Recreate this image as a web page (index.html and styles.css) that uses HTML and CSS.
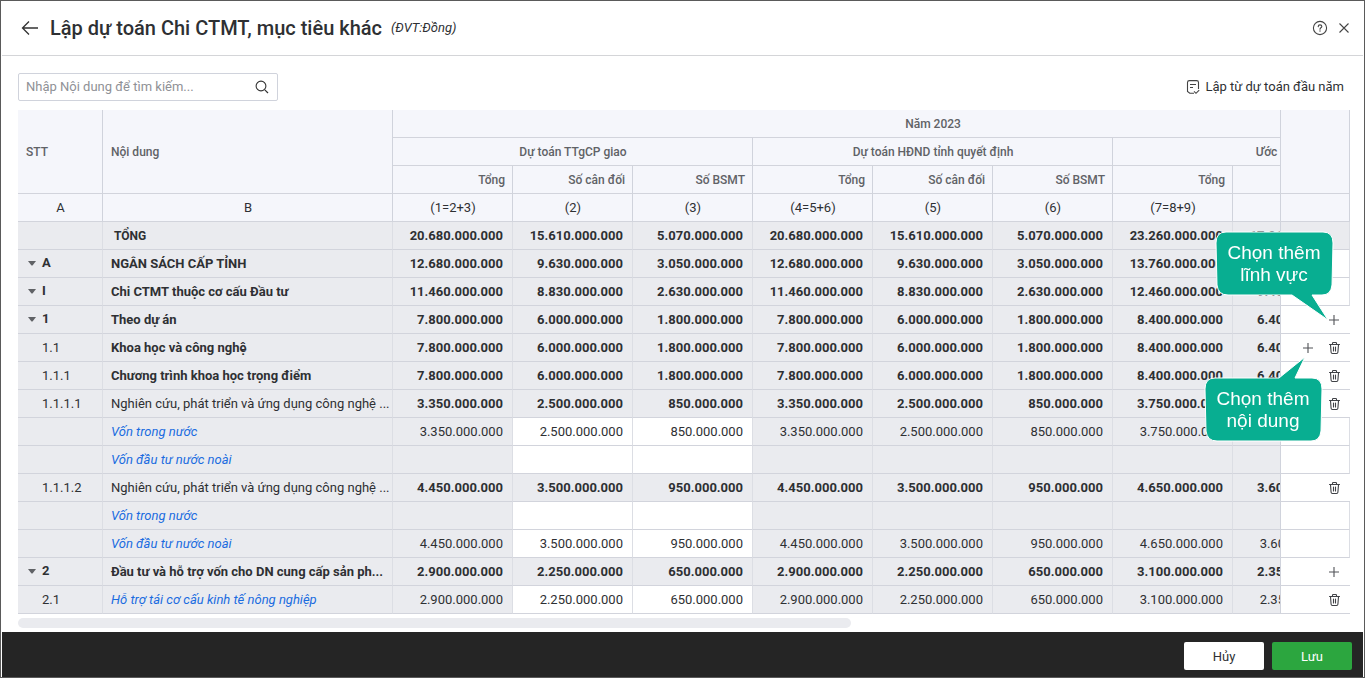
FILE: index.html
```html
<!DOCTYPE html>
<html lang="vi">
<head>
<meta charset="utf-8">
<title>Lập dự toán Chi CTMT, mục tiêu khác</title>
<link rel="stylesheet" href="styles.css">
</head>
<body>
<svg class="sprite" aria-hidden="true">
  <symbol id="plus" viewBox="0 0 16 16"><path d="M8 3v10M3 8h10" fill="none" stroke="#505257" stroke-width="1.1"/></symbol>
  <symbol id="trash" viewBox="0 0 16 16"><g fill="none" stroke="#404247" stroke-width="1.1" stroke-linejoin="round" stroke-linecap="round"><path d="M3.500 4.500h10M6.500 4.300V3.200Q6.500 2.500 7.200 2.500h2.600q.7 0 .7.7v1.100M4.500 4.700l.6 7.600q.1 1.200 1.300 1.200h4.200q1.200 0 1.300-1.200l.6-7.600M7.500 7v4M9.500 7v4"/></g></symbol>
  <symbol id="caret" viewBox="0 0 8 5"><path d="M0 0h8L4.500 4.500h-1z" fill="#606266"/></symbol>
</svg>
<div class="page">
  <header class="header">
    <button class="icon-button" aria-label="Quay lại"><svg width="18" height="16" viewBox="0 0 18 16"><path d="M17 8H2M8 1.500L1.500 8 8 14.500" fill="none" stroke="#333" stroke-width="1.300"/></svg></button>
    <h1 class="title">Lập dự toán Chi CTMT, mục tiêu khác</h1>
    <span class="unit">(ĐVT:Đồng)</span>
    <div class="header-tools">
      <button class="icon-button" aria-label="Trợ giúp"><svg width="16" height="16" viewBox="0 0 16 16"><g fill="none" stroke="#444" stroke-width="1.100"><circle cx="8" cy="8" r="6.600"/><path d="M6.200 6.600Q6.300 4.900 8 4.900T9.800 6.400Q9.800 7.200 8.900 7.700Q8 8.200 8 9.200" stroke-linecap="round"/></g><circle cx="8" cy="11" r=".7" fill="#444"/></svg></button>
      <button class="icon-button" aria-label="Đóng"><svg width="16" height="16" viewBox="0 0 16 16"><path d="M3.500 3.500l9 9M12.500 3.500l-9 9" fill="none" stroke="#444" stroke-width="1.100"/></svg></button>
    </div>
  </header>

  <main class="content">
    <div class="toolbar">
      <div class="search">
        <input class="search-input" type="text" aria-label="Tìm kiếm nội dung" placeholder="Nhập Nội dung để tìm kiếm...">
        <button class="icon-button" aria-label="Tìm kiếm"><svg width="14" height="14" viewBox="0 0 14 14"><path d="M9.800 9.800L13 13" fill="none" stroke="#333" stroke-width="1.200"/><circle cx="6" cy="6" r="4.900" fill="none" stroke="#333" stroke-width="1.100"/></svg></button>
      </div>
      <button class="text-button"><svg width="14" height="16" viewBox="0 0 14 16"><path d="M8 14.200H3.800L1.500 12.500V3.500Q1.500 1.600 3.400 1.600h7.200q1.900 0 1.900 1.900V10M4 5.500h6M4 8.500h3M8 12.300l2 2 3.200-3.200" fill="none" stroke="#444" stroke-width="1.100"/></svg><span class="text-label">Lập từ dự toán đầu năm</span></button>
    </div>

    <div class="grid">
      <div class="scroller">
        <table class="table">
          <colgroup><col class="c-no"><col class="c-name"><col class="c-num" span="9"><col class="c-act"></colgroup>
          <thead>
            <tr><th class="left" rowspan="3">STT</th><th class="left" rowspan="3">Nội dung</th><th colspan="9">Năm 2023</th><th class="act" rowspan="3"></th></tr>
            <tr><th colspan="3">Dự toán TTgCP giao</th><th colspan="3">Dự toán HĐND tỉnh quyết định</th><th colspan="3">Ước thực hiện</th></tr>
            <tr class="right"><th>Tổng</th><th>Số cân đối</th><th>Số BSMT</th><th>Tổng</th><th>Số cân đối</th><th>Số BSMT</th><th>Tổng</th><th>Số cân đối</th><th>Số BSMT</th></tr>
            <tr class="formula"><td>A</td><td>B</td><td>(1=2+3)</td><td>(2)</td><td>(3)</td><td>(4=5+6)</td><td>(5)</td><td>(6)</td><td>(7=8+9)</td><td>(8)</td><td>(9)</td><td class="act"></td></tr>
          </thead>
          <tbody>
            <tr class="strong total"><td></td><td>TỔNG</td><td>20.680.000.000</td><td>15.610.000.000</td><td>5.070.000.000</td><td>20.680.000.000</td><td>15.610.000.000</td><td>5.070.000.000</td><td>23.260.000.000</td><td>17.910.000.000</td><td>5.350.000.000</td><td class="act"></td></tr>
            <tr class="strong group"><td><button class="toggle" aria-label="Thu gọn"><svg><use href="#caret"/></svg></button>A</td><td>NGÂN SÁCH CẤP TỈNH</td><td>12.680.000.000</td><td>9.630.000.000</td><td>3.050.000.000</td><td>12.680.000.000</td><td>9.630.000.000</td><td>3.050.000.000</td><td>13.760.000.000</td><td>10.460.000.000</td><td>3.300.000.000</td><td class="act"></td></tr>
            <tr class="strong group"><td><button class="toggle" aria-label="Thu gọn"><svg><use href="#caret"/></svg></button>I</td><td>Chi CTMT thuộc cơ cấu Đầu tư</td><td>11.460.000.000</td><td>8.830.000.000</td><td>2.630.000.000</td><td>11.460.000.000</td><td>8.830.000.000</td><td>2.630.000.000</td><td>12.460.000.000</td><td>9.460.000.000</td><td>3.000.000.000</td><td class="act"></td></tr>
            <tr class="strong group"><td><button class="toggle" aria-label="Thu gọn"><svg><use href="#caret"/></svg></button>1</td><td>Theo dự án</td><td>7.800.000.000</td><td>6.000.000.000</td><td>1.800.000.000</td><td>7.800.000.000</td><td>6.000.000.000</td><td>1.800.000.000</td><td>8.400.000.000</td><td>6.400.000.000</td><td>2.000.000.000</td><td class="act open"><button class="row-button" aria-label="Chọn thêm lĩnh vực"><svg><use href="#plus"/></svg></button></td></tr>
            <tr class="strong"><td>1.1</td><td>Khoa học và công nghệ</td><td>7.800.000.000</td><td>6.000.000.000</td><td>1.800.000.000</td><td>7.800.000.000</td><td>6.000.000.000</td><td>1.800.000.000</td><td>8.400.000.000</td><td>6.400.000.000</td><td>2.000.000.000</td><td class="act open"><button class="row-button" aria-label="Chọn thêm nội dung"><svg><use href="#plus"/></svg></button><button class="row-button" aria-label="Xóa"><svg><use href="#trash"/></svg></button></td></tr>
            <tr class="strong"><td>1.1.1</td><td>Chương trình khoa học trọng điểm</td><td>7.800.000.000</td><td>6.000.000.000</td><td>1.800.000.000</td><td>7.800.000.000</td><td>6.000.000.000</td><td>1.800.000.000</td><td>8.400.000.000</td><td>6.400.000.000</td><td>2.000.000.000</td><td class="act open"><button class="row-button" aria-label="Xóa"><svg><use href="#trash"/></svg></button></td></tr>
            <tr class="strong item"><td>1.1.1.1</td><td>Nghiên cứu, phát triển và ứng dụng công nghệ ...</td><td>3.350.000.000</td><td>2.500.000.000</td><td>850.000.000</td><td>3.350.000.000</td><td>2.500.000.000</td><td>850.000.000</td><td>3.750.000.000</td><td>2.800.000.000</td><td>950.000.000</td><td class="act open"><button class="row-button" aria-label="Xóa"><svg><use href="#trash"/></svg></button></td></tr>
            <tr><td></td><td><a href="#">Vốn trong nước</a></td><td>3.350.000.000</td><td class="edit">2.500.000.000</td><td class="edit">850.000.000</td><td>3.350.000.000</td><td>2.500.000.000</td><td>850.000.000</td><td>3.750.000.000</td><td>2.800.000.000</td><td>950.000.000</td><td class="act"></td></tr>
            <tr><td></td><td><a href="#">Vốn đầu tư nước noài</a></td><td></td><td class="edit"></td><td class="edit"></td><td></td><td></td><td></td><td></td><td></td><td></td><td class="act"></td></tr>
            <tr class="strong item"><td>1.1.1.2</td><td>Nghiên cứu, phát triển và ứng dụng công nghệ ...</td><td>4.450.000.000</td><td>3.500.000.000</td><td>950.000.000</td><td>4.450.000.000</td><td>3.500.000.000</td><td>950.000.000</td><td>4.650.000.000</td><td>3.600.000.000</td><td>1.050.000.000</td><td class="act open"><button class="row-button" aria-label="Xóa"><svg><use href="#trash"/></svg></button></td></tr>
            <tr><td></td><td><a href="#">Vốn trong nước</a></td><td></td><td class="edit"></td><td class="edit"></td><td></td><td></td><td></td><td></td><td></td><td></td><td class="act"></td></tr>
            <tr><td></td><td><a href="#">Vốn đầu tư nước noài</a></td><td>4.450.000.000</td><td class="edit">3.500.000.000</td><td class="edit">950.000.000</td><td>4.450.000.000</td><td>3.500.000.000</td><td>950.000.000</td><td>4.650.000.000</td><td>3.600.000.000</td><td>1.050.000.000</td><td class="act"></td></tr>
            <tr class="strong group"><td><button class="toggle" aria-label="Thu gọn"><svg><use href="#caret"/></svg></button>2</td><td>Đầu tư và hỗ trợ vốn cho DN cung cấp sản ph...</td><td>2.900.000.000</td><td>2.250.000.000</td><td>650.000.000</td><td>2.900.000.000</td><td>2.250.000.000</td><td>650.000.000</td><td>3.100.000.000</td><td>2.350.000.000</td><td>750.000.000</td><td class="act open"><button class="row-button" aria-label="Chọn thêm lĩnh vực"><svg><use href="#plus"/></svg></button></td></tr>
            <tr><td>2.1</td><td><a href="#">Hỗ trợ tái cơ cấu kinh tế nông nghiệp</a></td><td>2.900.000.000</td><td class="edit">2.250.000.000</td><td class="edit">650.000.000</td><td>2.900.000.000</td><td>2.250.000.000</td><td>650.000.000</td><td>3.100.000.000</td><td>2.350.000.000</td><td>750.000.000</td><td class="act open"><button class="row-button" aria-label="Xóa"><svg><use href="#trash"/></svg></button></td></tr>
          </tbody>
        </table>
      </div>
      <div class="callout callout-field">
        <svg class="callout-shape" width="118" height="88" viewBox="0 0 118 88"><path d="M11 0H108Q118 0 118 11L117 53Q116 63 107 63H97L113 88L77 63H13Q3 63 2 53L1 11Q1 0 11 0Z" fill="#08ae91" stroke="#fff" stroke-width="1"/></svg>
        <span class="callout-text">Chọn thêm<br>lĩnh vực</span>
      </div>
      <div class="callout callout-item">
        <svg class="callout-shape" width="118" height="86" viewBox="0 0 118 86"><path d="M11 22H75L101 1L91 22H108Q118 22 118 33L117 75Q116 85 107 85H13Q3 85 2 75L1 33Q1 22 11 22Z" fill="#08ae91" stroke="#fff" stroke-width="1"/></svg>
        <span class="callout-text">Chọn thêm<br>nội dung</span>
      </div>
    </div>
    <div class="scrollbar"><div class="scroll-thumb"></div></div>
  </main>

  <footer class="footer">
    <button class="button">Hủy</button>
    <button class="button primary">Lưu</button>
  </footer>
</div>
</body>
</html>
```
FILE: styles.css
```css
* { box-sizing: border-box; }
body { margin: 0; font-family: Roboto, "Noto Sans", sans-serif; font-size: 13px; color: #2e3033; background: #fff; }
button { margin: 0; padding: 0; border: 0; background: none; font: inherit; color: inherit; cursor: pointer; }
svg { display: block; }
.sprite { position: absolute; width: 0; height: 0; }

.page { display: flex; flex-direction: column; min-height: 100vh; padding: 0 1px; border: 1px solid #5a5a5a; }

.header { display: flex; align-items: center; height: 55px; padding: 0 11px 0 19px; border-bottom: 1px solid #d4d5d8; }
.icon-button { display: flex; align-items: center; justify-content: center; }
.title { margin: 0 0 0 11px; font-size: 20px; font-weight: 500; line-height: 28px; }
.unit { margin-left: 9px; padding-bottom: 2px; font-style: italic; }
.header-tools { display: flex; gap: 8px; margin-left: auto; }

.content { flex: 1; padding: 17px 13px 4px 16px; }
.toolbar { display: flex; align-items: center; justify-content: space-between; margin-bottom: 9px; padding-right: 6px; }
.search { display: flex; align-items: center; width: 260px; height: 28px; padding: 0 8px 0 7px; border: 1px solid #d0d3dc; border-radius: 2px; }
.search-input { flex: 1; min-width: 0; padding: 0 0 2px; border: 0; outline: 0; font: inherit; background: none; }
.search-input::placeholder { color: #8f9196; opacity: 1; }
.text-button { display: flex; align-items: center; gap: 5px; }
.text-label { padding-bottom: 2px; }

.grid { position: relative; }
.scroller { overflow-x: auto; scrollbar-width: none; }
.table { width: 1525px; table-layout: fixed; border-collapse: separate; border-spacing: 0; }
.c-no { width: 85px; }
.c-name { width: 290px; }
.c-num { width: 120px; }
.c-act { width: 70px; }
.table th, .table td { height: 28px; padding: 0 9px 0 8px; border-right: 1px solid #dcdee4; border-bottom: 1px solid #d2d4dc; line-height: 16px; white-space: nowrap; }
.table thead th, .table thead td { padding-right: 7px; border-right-color: #d0d3dc; background: #f5f6fb; }
.table th { font-size: 12px; font-weight: 500; color: #606266; text-align: center; }
.table .left { text-align: left; }
.table .right th { text-align: right; }
.table .formula td { text-align: center; }
.table tbody td { background: #eaebef; text-align: right; }
.table tbody td:nth-child(1) { padding-left: 24px; text-align: left; }
.table tbody td:nth-child(2) { padding-right: 0; text-align: left; }
.table .strong td { font-weight: 700; }
.table .strong td:nth-child(1), .table .item td:nth-child(2) { font-weight: 400; }
.table .group td:nth-child(1), .table .group td:nth-child(2) { font-weight: 700; }
.table .total td:nth-child(2) { padding-left: 11px; font-size: 12px; }
.table .group td:nth-child(1) { padding-left: 10px; }
.table tbody td.edit { background: #fff; }
.toggle { display: inline-flex; width: 14px; height: 16px; align-items: center; vertical-align: middle; }
.toggle svg { width: 8px; height: 5px; }
.table a { color: #1a6be0; font-style: italic; text-decoration: none; }

.table .act { position: sticky; right: 0; padding: 0 2px 0 0; border-left: 1px solid #d0d3dc; }
.table tbody .act { background: #fff; }
.table tbody .total .act { background: #eaebef; }
.table tbody .open { padding-right: 3px; border-right: 0; }
.row-button { display: inline-flex; align-items: center; justify-content: center; width: 26px; height: 24px; vertical-align: middle; }
.row-button svg { width: 16px; height: 16px; }

.callout { position: absolute; width: 118px; color: #fff; font-family: "Liberation Sans", Arial, sans-serif; font-size: 19px; line-height: 22px; text-align: center; }
.callout-field { top: 122px; right: 17px; padding-top: 10px; }
.callout-item { top: 246px; right: 28px; padding-top: 32px; }
.callout-shape { position: absolute; top: 0; left: 0; overflow: visible; }
.callout-text { position: relative; display: block; }

.scrollbar { padding-top: 4px; }
.scroll-thumb { width: 62.5%; height: 10px; border-radius: 5px; background: #eaebef; }

.footer { display: flex; align-items: flex-start; justify-content: flex-end; gap: 8px; padding: 10px 11px 7px; background: #252525; }
.button { width: 80px; height: 28px; border-radius: 2px; background: #fff; }
.primary { background: #2ca63f; color: #fff; }
```
